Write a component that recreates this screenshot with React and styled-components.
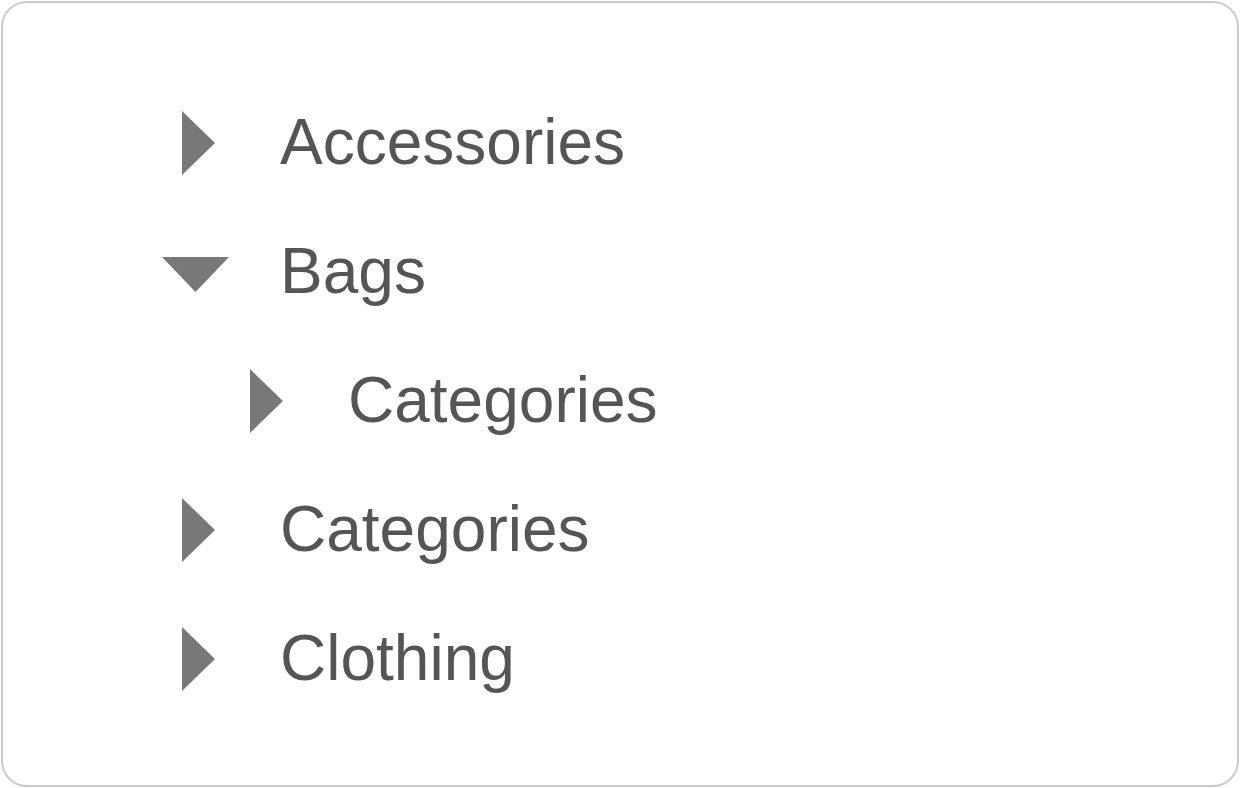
import React from "react";
import styled, { createGlobalStyle } from "styled-components";

const Global = createGlobalStyle`
  html, body { margin: 0; padding: 0; background: #ffffff; }
  body { font-family: "Liberation Sans", Arial, Helvetica, sans-serif; }
  * { box-sizing: border-box; }
`;

const Frame = styled.div`
  width: 1240px;
  height: 788px;
  padding: 1px;
`;

const Card = styled.div`
  width: 100%;
  height: 100%;
  border: 2px solid #cbcbcb;
  border-radius: 26px;
  background: #fff;
  padding: 75px 0 0 159px;
`;

const Tree = styled.ul`
  list-style: none;
  margin: 0;
  padding: 0;
`;

const Row = styled.li`
  display: flex;
  align-items: center;
  height: 129px;
  padding-left: ${(p) => p.$level * 68}px;
`;

const Toggle = styled.span`
  display: flex;
  width: 68px;
  height: 68px;
  flex: none;
  margin-right: 50px;
  svg { display: block; }
`;

const Label = styled.span`
  font-size: 64px;
  line-height: 129px;
  color: #555555;
  white-space: nowrap;
`;

const Caret = ({ open }) => (
  <svg width="68" height="68" viewBox="0 0 68 68">
    {open ? (
      <polygon points="0,19 67,19 33.5,54" fill="#787878" />
    ) : (
      <polygon points="20,2 53,34 20,66" fill="#787878" />
    )}
  </svg>
);

const items = [
  { label: "Accessories", level: 0, open: false },
  { label: "Bags", level: 0, open: true },
  { label: "Categories", level: 1, open: false },
  { label: "Categories", level: 0, open: false },
  { label: "Clothing", level: 0, open: false },
];

export default function App() {
  return (
    <>
      <Global />
      <Frame>
        <Card>
          <Tree>
            {items.map((it, i) => (
              <Row key={i} $level={it.level}>
                <Toggle>
                  <Caret open={it.open} />
                </Toggle>
                <Label>{it.label}</Label>
              </Row>
            ))}
          </Tree>
        </Card>
      </Frame>
    </>
  );
}
